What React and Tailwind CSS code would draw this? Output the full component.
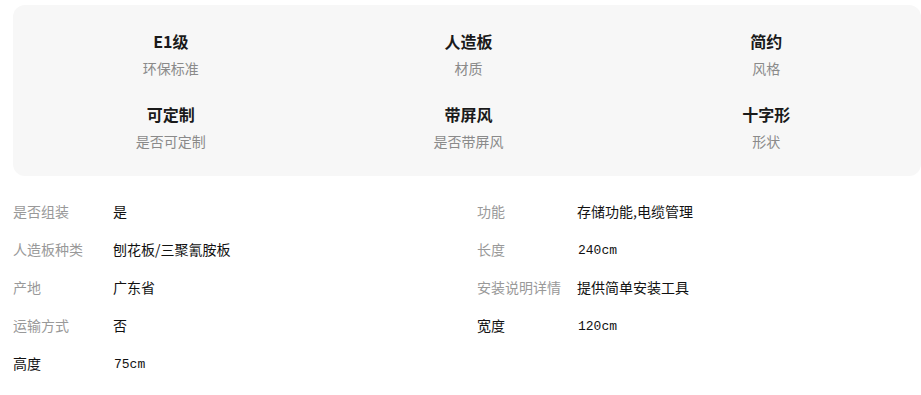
import React from "react";

const features = [
  { t: "E1级", s: "环保标准" },
  { t: "人造板", s: "材质" },
  { t: "简约", s: "风格" },
  { t: "可定制", s: "是否可定制" },
  { t: "带屏风", s: "是否带屏风" },
  { t: "十字形", s: "形状" },
];

const left = [
  { k: "是否组装", v: "是" },
  { k: "人造板种类", v: "刨花板/三聚氰胺板" },
  { k: "产地", v: "广东省" },
  { k: "运输方式", v: "否" },
  { k: "高度", v: "75cm", mono: true, dark: true },
];
const right = [
  { k: "功能", v: "存储功能,电缆管理" },
  { k: "长度", v: "240cm", mono: true },
  { k: "安装说明详情", v: "提供简单安装工具" },
  { k: "宽度", v: "120cm", mono: true, dark: true },
];

const cjk = { fontFamily: '"Noto Sans CJK SC", "Noto Sans", sans-serif' };
const mono = { fontFamily: '"Liberation Mono", "Noto Sans CJK SC", monospace' };

function Row({ k, v, mono: isMono, dark }) {
  return (
    <div className="flex h-[38px] items-center">
      <div
        className={`w-[100px] shrink-0 text-[14px] leading-5 ${dark ? "text-[#111]" : "text-[#999]"}`}
        style={cjk}
      >
        {k}
      </div>
      <div
        className={`text-[#111] leading-5 ${isMono ? "text-[13px] pl-[1px] pt-[3px]" : "text-[14px]"}`}
        style={isMono ? mono : cjk}
      >
        {v}
      </div>
    </div>
  );
}

export default function App() {
  return (
    <div className="w-[921px] h-[395px] bg-white pt-[5px] pl-[13px] overflow-hidden" style={cjk}>
      <div className="w-[908px] rounded-[12px] bg-[#f7f7f7] pt-[24px] pb-[25px] pl-[9px] pr-[6px]">
        <div className="grid grid-cols-3 gap-y-[24px]">
          {features.map((f) => (
            <div key={f.t} className="flex flex-col items-center">
              <div className="h-[24px] leading-[24px] text-[16px] font-bold text-[#1a1a1a]">{f.t}</div>
              <div className="mt-[5px] h-[20px] leading-[20px] text-[14px] text-[#8a8a8a]">{f.s}</div>
            </div>
          ))}
        </div>
      </div>
      <div className="mt-[16px] grid grid-cols-[464px_1fr]">
        <div className="flex flex-col">
          {left.map((r) => (
            <Row key={r.k} {...r} />
          ))}
        </div>
        <div className="flex flex-col">
          {right.map((r) => (
            <Row key={r.k} {...r} />
          ))}
        </div>
      </div>
    </div>
  );
}
